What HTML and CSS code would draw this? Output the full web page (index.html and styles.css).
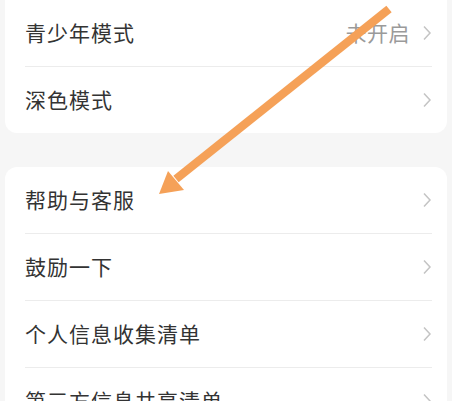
FILE: index.html
```html
<!DOCTYPE html>
<html lang="zh-CN">
<head>
<meta charset="utf-8">
<link rel="stylesheet" href="styles.css">
</head>
<body>
<div class="page">
  <section class="card card-top">
    <div class="row">
      <span class="label">青少年模式</span>
      <span class="value">未开启</span>
      <svg class="chev" viewBox="0 0 10 16"><path d="M2 1.5 L8 8 L2 14.5" /></svg>
    </div>
    <div class="row">
      <span class="label">深色模式</span>
      <svg class="chev" viewBox="0 0 10 16"><path d="M2 1.5 L8 8 L2 14.5" /></svg>
    </div>
  </section>
  <section class="card">
    <div class="row">
      <span class="label">帮助与客服</span>
      <svg class="chev" viewBox="0 0 10 16"><path d="M2 1.5 L8 8 L2 14.5" /></svg>
    </div>
    <div class="row">
      <span class="label">鼓励一下</span>
      <svg class="chev" viewBox="0 0 10 16"><path d="M2 1.5 L8 8 L2 14.5" /></svg>
    </div>
    <div class="row">
      <span class="label">个人信息收集清单</span>
      <svg class="chev" viewBox="0 0 10 16"><path d="M2 1.5 L8 8 L2 14.5" /></svg>
    </div>
    <div class="row">
      <span class="label">第三方信息共享清单</span>
      <svg class="chev" viewBox="0 0 10 16"><path d="M2 1.5 L8 8 L2 14.5" /></svg>
    </div>
  </section>
  <svg class="arrow" viewBox="0 0 452 401" width="452" height="401">
    <line x1="389" y1="9" x2="176" y2="179" />
    <polygon points="159,194 168,171 184,190" />
  </svg>
</div>
</body>
</html>
```
FILE: styles.css
```css
html, body {
  margin: 0;
  padding: 0;
  background: #f6f6f6;
}
body {
  font-family: "Noto Sans CJK SC", "Noto Sans", sans-serif;
  width: 452px;
  height: 401px;
  overflow: hidden;
}
.page {
  position: relative;
  padding: 0 5px;
}
.card {
  background: #fff;
  border-radius: 12px;
  padding: 0 15px 0 20px;
}
.card-top {
  border-radius: 0 0 12px 12px;
  margin-bottom: 34px;
}
.row {
  display: flex;
  align-items: center;
  height: 66px;
  border-bottom: 1px solid #ececec;
}
.card > .row:last-child {
  border-bottom: none;
}
.label {
  flex: 1;
  font-size: 21px;
  color: #333;
  letter-spacing: 1px;
  margin-top: -2px;
}
.value {
  font-size: 21px;
  color: #9a9a9a;
  letter-spacing: 0.5px;
  margin-right: 12px;
  margin-top: -2px;
}
.chev {
  width: 10px;
  height: 16px;
  fill: none;
  stroke: #c4c4c4;
  stroke-width: 1.5;
}
.arrow {
  position: absolute;
  left: 0;
  top: 0;
  pointer-events: none;
}
.arrow line {
  stroke: #f5a158;
  stroke-width: 8.5;
  stroke-linecap: butt;
}
.arrow polygon {
  fill: #f5a158;
}
```
